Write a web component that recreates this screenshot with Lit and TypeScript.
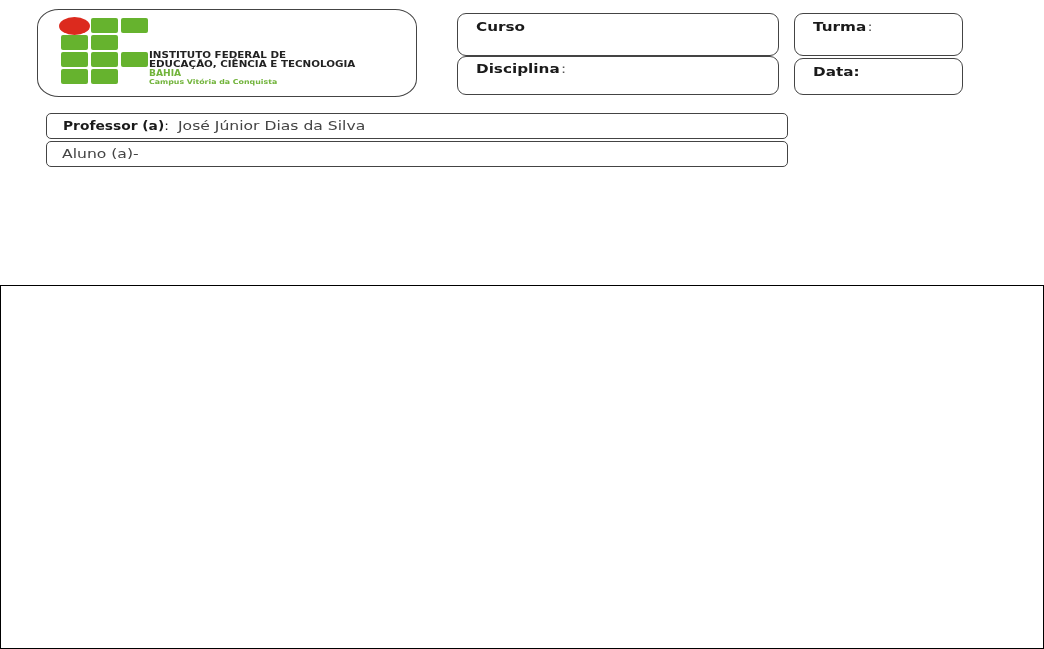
import { LitElement, html, css } from "lit";
import { customElement } from "lit/decorators.js";

@customElement("app-root")
export class AppRoot extends LitElement {
  static styles = css`
    :host { display: block; width: 1044px; height: 649px; background: #fff; overflow: hidden; font-family: "DejaVu Sans", sans-serif; color: #1a1a1a; }
    .sheet { display: flex; flex-direction: column; height: 649px; box-sizing: border-box; padding-top: 9px; }
    .top { display: flex; align-items: flex-start; padding-left: 37px; height: 87px; }
    .box { box-sizing: border-box; border: 1px solid #444; background: #fff; filter: blur(0.45px); }
    .logo { width: 380px; height: 88px; border-radius: 22px / 18px; display: flex; padding: 8px 0 0 23px; position: relative; flex: none; }
    .mark { display: grid; grid-template-columns: repeat(3, 27px); grid-template-rows: repeat(4, 15px); gap: 2px 3px; }
    .mark i { background: #66b32e; border-radius: 2px; display: block; }
    .mark i.none { background: transparent; }
    .red { position: absolute; left: 21px; top: 7px; width: 31px; height: 18px; border-radius: 50%; background: #dc2a1e; }
    .logotext { position: absolute; left: 111px; top: 41px; font-size: 8px; line-height: 9px; white-space: nowrap; font-weight: 700; color: #222; }
    .logotext div { transform: scaleX(1.29); transform-origin: left center; }
    .logotext .g { color: #72b43c; transform: scaleX(1.14); }
    .logotext .s { color: #72b43c; font-size: 6.6px; line-height: 8px; transform: scaleX(1.19); }
    .col { display: flex; flex-direction: column; flex: none; margin-top: 4px; }
    .c1 { width: 322px; margin-left: 40px; }
    .c2 { width: 169px; margin-left: 15px; }
    .cell { border-radius: 9px; font-size: 12px; font-weight: 700; line-height: 14px; }
    .st { display: inline-block; transform: scaleX(1.27); transform-origin: left center; }
    .h42 { height: 43px; padding: 6px 0 0 18px; }
    .h39 { height: 39px; padding: 5px 0 0 18px; }
    .gap { margin-top: 2px; height: 37px; padding: 6px 0 0 18px; }
    .light { font-weight: 400; color: #555; margin-left: 1px; }
    .rows { display: flex; flex-direction: column; gap: 2px; padding: 17px 0 0 46px; }
    .row { display: flex; width: 742px; height: 26px; border-radius: 5px; padding: 5px 0 0 16px; font-size: 12px; line-height: 14px; white-space: nowrap; }
    .row.a { padding-left: 15px; color: #444; }
    .lbl { width: 115px; flex: none; transform: scaleX(1.15); transform-origin: left center; }
    .lbl b { font-weight: 700; color: #1a1a1a; }
    .val { color: #444; transform: scaleX(1.3); transform-origin: left center; }
    .area { box-sizing: border-box; border: 1px solid #000; height: 364px; width: 1044px; margin-top: 118px; background: #fff; }
  `;

  render() {
    const cells = [0, 1, 1, 1, 1, 0, 1, 1, 1, 1, 1, 0];
    return html`
      <div class="sheet">
        <div class="top">
          <div class="box logo">
            <div class="mark">${cells.map((c) => html`<i class=${c ? "" : "none"}></i>`)}</div>
            <div class="red"></div>
            <div class="logotext">
              <div>INSTITUTO FEDERAL DE</div>
              <div>EDUCAÇÃO, CIÊNCIA E TECNOLOGIA</div>
              <div class="g">BAHIA</div>
              <div class="s">Campus Vitória da Conquista</div>
            </div>
          </div>
          <div class="col c1">
            <div class="box cell h42"><span class="st">Curso</span></div>
            <div class="box cell h39"><span class="st">Disciplina<span class="light">:</span></span></div>
          </div>
          <div class="col c2">
            <div class="box cell h42"><span class="st">Turma<span class="light">:</span></span></div>
            <div class="box cell gap"><span class="st">Data:</span></div>
          </div>
        </div>
        <div class="rows">
          <div class="box row"><span class="lbl"><b>Professor (a)</b>:</span><span class="val">José Júnior Dias da Silva</span></div>
          <div class="box row a"><span class="val">Aluno (a)-</span></div>
        </div>
        <div class="area"></div>
      </div>
    `;
  }
}
